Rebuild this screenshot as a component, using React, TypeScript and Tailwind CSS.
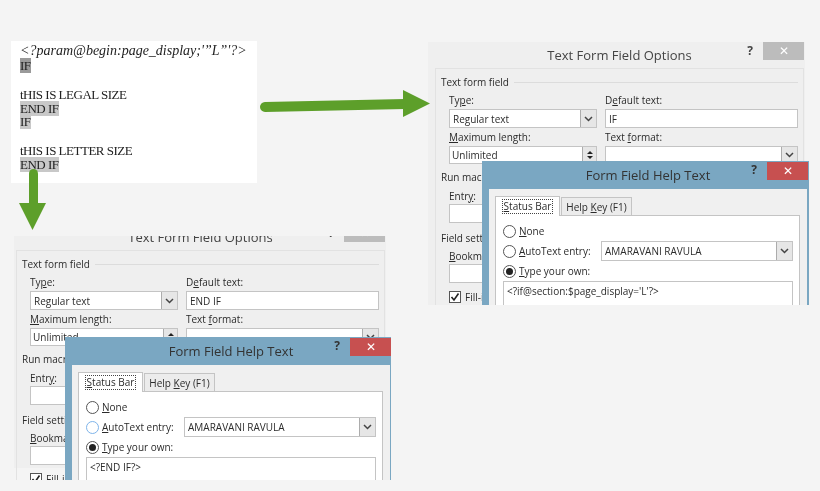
const ui = "font-['Open_Sans',sans-serif]";

function Chevron() {
  return (
    <svg width="9" height="6" viewBox="0 0 9 6">
      <path d="M1 1l3.5 3.5L8 1" fill="none" stroke="#444" strokeWidth="1.5" />
    </svg>
  );
}

function ComboArrow() {
  return (
    <span className="flex h-full w-[16px] shrink-0 items-center justify-center border-l border-[#acacac] bg-[#e6e6e6]">
      <Chevron />
    </span>
  );
}

function Radio({ checked, focused, label }: { checked?: boolean; focused?: boolean; label: React.ReactNode }) {
  return (
    <div className="flex h-[14px] items-center gap-[3px]">
      <span
        className={`flex h-[13px] w-[13px] shrink-0 items-center justify-center rounded-full border bg-white ${
          focused ? "border-[#7eb4ea]" : "border-[#555]"
        }`}
      >
        {checked && <span className="h-[7px] w-[7px] rounded-full bg-[#222]" />}
      </span>
      <span>{label}</span>
    </div>
  );
}

function HelpDialog({ text, focused, className }: { text: string; focused?: boolean; className: string }) {
  return (
    <div className={`absolute w-[327px] bg-[#7aa7c2] pl-[7px] pr-[2px] ${className}`}>
      <div className="relative -mr-[2px] -ml-[7px] flex h-[28px] items-center justify-center pl-[5px] text-[13px] text-[#333]">
        Form Field Help Text
        <span className="absolute right-[52px] top-[2px] text-[12px] font-bold">?</span>
        <span className="absolute right-[1px] top-[1px] flex h-[18px] w-[41px] items-center justify-center bg-[#c75050] text-[12px] text-white">
          ✕
        </span>
      </div>
      <div className="h-[200px] bg-[#f0f0f0] pl-[6px] pr-[7px] pt-[7px]">
        <div className="flex items-end">
          <span className="z-10 -mb-px flex h-[20px] w-[65px] items-center justify-center border border-b-0 border-[#c4c4c4] bg-white">
            <span className="border border-dotted border-[#444] px-[1px] leading-[13px]">
              <u>S</u>tatus Bar
            </span>
          </span>
          <span className="ml-px flex h-[18px] w-[71px] items-center justify-center border border-b-0 border-[#c4c4c4] bg-[#ececec]">
            <span>
              Help <u>K</u>ey (F1)
            </span>
          </span>
        </div>
        <div className="h-[180px] border border-[#c4c4c4] bg-white pl-[7px] pr-[6px] pt-[8px]">
          <Radio label={<><u>N</u>one</>} />
          <div className="mt-[3px] flex h-[20px] items-center justify-between">
            <Radio focused={focused} label={<><u>A</u>utoText entry:</>} />
            <span className="flex h-[20px] w-[192px] items-center justify-between border border-[#c4c4c4] pl-[3px]">
              AMARAVANI RAVULA
              <ComboArrow />
            </span>
          </div>
          <div className="mt-[3px]">
            <Radio checked label={<><u>T</u>ype your own:</>} />
          </div>
          <div className="mt-[3px] h-[60px] border border-[#c4c4c4] px-[3px] pt-[2px]">{text}</div>
        </div>
      </div>
    </div>
  );
}

function OptionsDialog({
  defaultText,
  helpText,
  focused,
  className,
  innerClass,
  helpClass,
}: {
  defaultText: string;
  helpText: string;
  focused?: boolean;
  className: string;
  innerClass: string;
  helpClass: string;
}) {
  return (
    <div className={`absolute overflow-hidden text-[10px] leading-[14px] text-[#2b2b2b] ${ui} ${className}`}>
      <div className={`h-full bg-[#efefef] ${innerClass}`}>
        <div className="relative flex h-[26px] w-[369px] items-center justify-center text-[13px] text-[#444]">
          Text Form Field Options
          <span className="absolute right-[51px] top-[2px] text-[12px] font-bold">?</span>
          <span className="absolute right-0 top-0 flex h-[18px] w-[41px] items-center justify-center bg-[#bcbcbc] text-[12px] text-white">
            ✕
          </span>
        </div>
        <div className="h-[260px] w-[369px] border border-[#e2e2e2] px-[5px] pt-[6px]">
          <div className="flex items-center gap-[5px]">
            Text form field
            <span className="h-px flex-1 bg-[#dcdcdc]" />
          </div>
          <div className="mt-[4px] grid grid-cols-[148px_193px] gap-x-[8px] pl-[8px]">
            <div>
              Ty<u>p</u>e:
              <span className="mt-[2px] flex h-[19px] items-center justify-between border border-[#c4c4c4] bg-white pl-[3px]">
                Regular text
                <ComboArrow />
              </span>
            </div>
            <div>
              D<u>e</u>fault text:
              <span className="mt-[2px] flex h-[19px] items-center border border-[#c4c4c4] bg-white pl-[3px]">{defaultText}</span>
            </div>
            <div className="mt-[2px]">
              <u>M</u>aximum length:
              <span className="mt-[2px] flex h-[18px] items-center justify-between border border-[#c4c4c4] bg-white pl-[2px]">
                Unlimited
                <span className="flex h-full w-[14px] flex-col items-center justify-center gap-[2px] border-l border-[#acacac] bg-[#e6e6e6]">
                  <span className="h-0 w-0 border-x-[3px] border-b-[3px] border-x-transparent border-b-[#222]" />
                  <span className="h-0 w-0 border-x-[3px] border-t-[3px] border-x-transparent border-t-[#222]" />
                </span>
              </span>
            </div>
            <div className="mt-[2px]">
              Text <u>f</u>ormat:
              <span className="mt-[2px] flex h-[18px] items-center justify-end border border-[#c4c4c4] bg-white">
                <ComboArrow />
              </span>
            </div>
          </div>
          <div className="mt-[6px]">Run macro on</div>
          <div className="mt-[5px] pl-[8px]">
            Entr<u>y</u>:
            <span className="mt-[1px] block h-[19px] w-[148px] border border-[#c4c4c4] bg-white" />
          </div>
          <div className="mt-[8px]">Field settings</div>
          <div className="mt-[4px] pl-[8px]">
            <u>B</u>ookmark:
            <span className="mt-[1px] block h-[19px] w-[148px] border border-[#c4c4c4] bg-white" />
          </div>
          <div className="mt-[7px] flex items-center gap-[4px] pl-[8px]">
            <span className="flex h-[12px] w-[12px] items-center justify-center border border-[#555] bg-white">
              <svg width="10" height="10" viewBox="0 0 10 10">
                <path d="M1.5 5l2.5 3L8.5 1.5" fill="none" stroke="#222" strokeWidth="1.6" />
              </svg>
            </span>
            Fill-in enabled
          </div>
        </div>
      </div>
      <HelpDialog text={helpText} focused={focused} className={helpClass} />
    </div>
  );
}

export default function App() {
  return (
    <div className="relative h-[491px] w-[820px] overflow-hidden bg-[#f4f4f4] blur-[0.4px]">
      <div className="absolute left-[11px] top-[41px] h-[142px] w-[246px] bg-white pl-[9px] pt-[3px] font-['Liberation_Serif',serif] text-[13px] leading-[13.5px] tracking-[-0.5px] text-[#222]">
        <div className="h-[15px] text-[14px] leading-[14px] italic tracking-normal">&lt;?param@begin:page_display;&apos;&rdquo;L&rdquo;&apos;?&gt;</div>
        <div><span className="bg-[#9a9a9a]">IF</span></div>
        <div className="mt-[15.5px]">tHIS IS LEGAL SIZE</div>
        <div><span className="bg-[#c8c8c8]">END IF</span></div>
        <div><span className="bg-[#c8c8c8]">IF</span></div>
        <div className="mt-[15.5px]">tHIS IS LETTER SIZE</div>
        <div><span className="bg-[#c8c8c8]">END IF</span></div>
      </div>

      <OptionsDialog
        className="left-[428px] top-[42px] h-[263px] w-[381px]"
        innerClass="w-[377px] pl-[7px]"
        defaultText="IF"
        helpText="<?if@section:$page_display='L'?>"
        helpClass="left-[54px] top-[119px]"
      />
      <OptionsDialog
        className="left-[14px] top-[236px] h-[244px] w-[377px]"
        innerClass="-mt-[12px] h-[256px] w-[372px] pl-[2px]"
        defaultText="END IF"
        helpText="<?END IF?>"
        focused
        helpClass="left-[51px] top-[101px]"
      />

      {/* green arrows */}
      <svg className="absolute left-0 top-0" width="820" height="491" viewBox="0 0 820 491">
        <path d="M265 107L405 104" stroke="#5d9f2a" strokeWidth="10" strokeLinecap="round" />
        <path d="M403 90L430 103.5L403 117Z" fill="#5d9f2a" />
        <path d="M33.5 173.5V205" stroke="#5d9f2a" strokeWidth="9" strokeLinecap="round" />
        <path d="M19 203H46L32.5 230Z" fill="#5d9f2a" />
      </svg>
    </div>
  );
}
